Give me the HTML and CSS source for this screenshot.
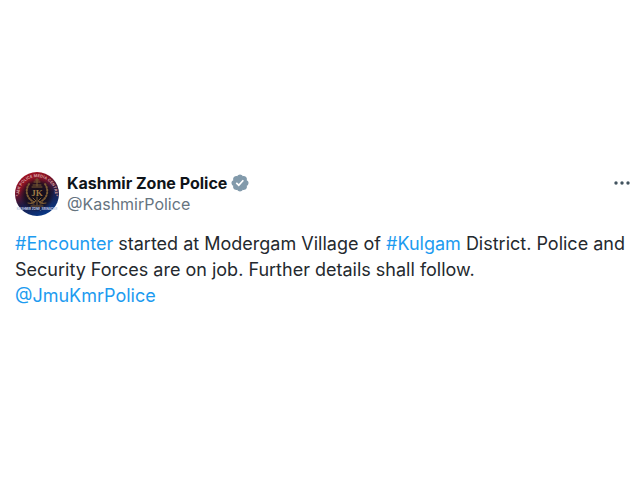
FILE: index.html
```html
<!DOCTYPE html>
<html lang="en">
<head>
    <meta charset="UTF-8">
    <meta name="viewport" content="width=device-width, initial-scale=1">
    <title>Kashmir Zone Police</title>
    <link rel="stylesheet" href="styles.css">
</head>
<body>

    <article class="tweet">
        <header class="tweet-header">
            <a class="avatar" href="#" aria-label="Kashmir Zone Police profile">
                <svg viewBox="0 0 44 44" width="44" height="44">
                    <defs>
                        <linearGradient id="shade" x1="0.25" y1="0" x2="0.7" y2="1">
                            <stop offset="0" stop-color="#a81420"/>
                            <stop offset="0.3" stop-color="#7c1226"/>
                            <stop offset="0.6" stop-color="#1c1a44"/>
                            <stop offset="1" stop-color="#063a8c"/>
                        </linearGradient>
                        <radialGradient id="middle">
                            <stop offset="0" stop-color="#100c14"/>
                            <stop offset="0.7" stop-color="#140e1c" stop-opacity="0.8"/>
                            <stop offset="1" stop-color="#140e1c" stop-opacity="0"/>
                        </radialGradient>
                        <path id="arc" d="M5 29a18 18 0 1 1 34 0"/>
                    </defs>
                    <circle cx="22" cy="22" r="22" fill="url(#shade)"/>
                    <circle cx="22" cy="23" r="17" fill="url(#middle)"/>
                    <text class="badge-arc"><textPath href="#arc" startOffset="50%" text-anchor="middle">*J&amp;K POLICE MEDIA CENTRE*</textPath></text>
                    <!-- wreath, crest and monogram -->
                    <g fill="none" stroke="#7d5c34" stroke-linecap="round">
                        <path d="M14 12c-4 6-3 14 5 18M30 12c4 6 3 14-5 18" stroke-width="2" stroke-dasharray="1 2"/>
                        <path d="M19 10h6M20 8h4M22 6v8M18 13h8M17 15h10" stroke-width="1"/>
                        <path d="M22 25v8M18 26l3 3-5 2M26 26l-3 3 5 2M13 31l6 1M31 31l-6 1M16 34h12" stroke-width="1"/>
                    </g>
                    <text class="badge-monogram" x="22" y="24" text-anchor="middle">JK</text>
                    <text class="badge-base" x="22" y="38" text-anchor="middle">KASHMIR ZONE, SRINAGAR</text>
                </svg>
            </a>
            <div class="author">
                <a class="name" href="#">
                    Kashmir Zone Police
                    <svg class="verified" viewBox="0 0 22 22" width="20" height="20" role="img" aria-label="Verified account">
                        <path fill="#829aab" d="M20.396 11c-.018-.646-.215-1.275-.57-1.816-.354-.54-.852-.972-1.438-1.246.223-.607.270-1.264.140-1.897-.131-.634-.437-1.218-.882-1.687-.470-.445-1.053-.750-1.687-.882-.633-.130-1.290-.083-1.897.140-.273-.587-.704-1.086-1.245-1.440S11.647 1.620 11 1.604c-.646.017-1.273.213-1.813.568s-.969.854-1.240 1.440c-.608-.223-1.267-.272-1.902-.140-.635.130-1.220.436-1.690.882-.445.470-.749 1.055-.878 1.688-.130.633-.080 1.290.144 1.896-.587.274-1.087.705-1.443 1.245-.356.540-.555 1.170-.574 1.817.020.647.218 1.276.574 1.817.356.540.856.972 1.443 1.245-.224.606-.274 1.263-.144 1.896.130.634.433 1.218.877 1.688.470.443 1.054.747 1.687.878.633.132 1.290.084 1.897-.136.274.586.705 1.084 1.246 1.439.540.354 1.170.551 1.816.569.647-.016 1.276-.213 1.817-.567s.972-.854 1.245-1.440c.604.239 1.266.296 1.903.164.636-.132 1.220-.447 1.680-.907.460-.460.776-1.044.908-1.681s.075-1.299-.165-1.903c.586-.274 1.084-.705 1.439-1.246.354-.540.551-1.170.569-1.816z"/>
                        <path fill="#fff" d="M9.662 14.850l-3.429-3.428 1.293-1.302 2.072 2.072 4.400-4.794 1.347 1.246z"/>
                    </svg>
                </a>
                <a class="handle" href="#">@KashmirPolice</a>
            </div>
            <button class="more" type="button" aria-label="More">
                <svg viewBox="0 0 20 20" width="20" height="20" fill="#42535f">
                    <circle cx="4" cy="10" r="1.700"/>
                    <circle cx="10" cy="10" r="1.700"/>
                    <circle cx="16" cy="10" r="1.700"/>
                </svg>
            </button>
        </header>

        <p class="tweet-text">
            <a href="#">#Encounter</a> started at Modergam Village of <a href="#">#Kulgam</a> District. Police and Security Forces are on job. Further details shall follow.<br>
            <a href="#">@JmuKmrPolice</a>
        </p>
    </article>

</body>
</html>
```

FILE: styles.css
```css
* {
    box-sizing: border-box;
}
body {
    font-family: Inter, 'Liberation Sans', sans-serif;
    background-color: #fff;
    color: #24292e;
    margin: 0;
    min-height: 100vh;
    display: flex;
    flex-direction: column;
    justify-content: center;
}
a {
    color: #1d9bf0;
    text-decoration: none;
}
.tweet {
    padding: 0 8px 0 15px;
}
.tweet-header {
    display: flex;
    align-items: flex-start;
    gap: 8px;
}
.avatar {
    flex: none;
}
.avatar svg {
    display: block;
}
.badge-arc {
    font-size: 4px;
    font-weight: 700;
    fill: #d8a0a0;
}
.badge-monogram {
    font-family: 'Liberation Serif', serif;
    font-size: 9px;
    font-weight: 700;
    fill: #a07c48;
}
.badge-base {
    font-size: 3px;
    font-weight: 700;
    fill: #c0cce4;
}
.author {
    flex: 1;
    display: flex;
    flex-direction: column;
    align-items: flex-start;
}
.name {
    display: flex;
    align-items: center;
    gap: 3px;
    color: #0f1419;
    font-size: 16px;
    font-weight: 700;
    line-height: 22px;
}
.handle {
    color: #66747f;
    font-size: 16px;
    line-height: 20px;
}
.more {
    display: flex;
    padding: 1px 0;
    border: none;
    background: none;
    cursor: pointer;
}
.tweet-text {
    margin: 15px 0 0;
    font-size: 18px;
    line-height: 26px;
}
```
